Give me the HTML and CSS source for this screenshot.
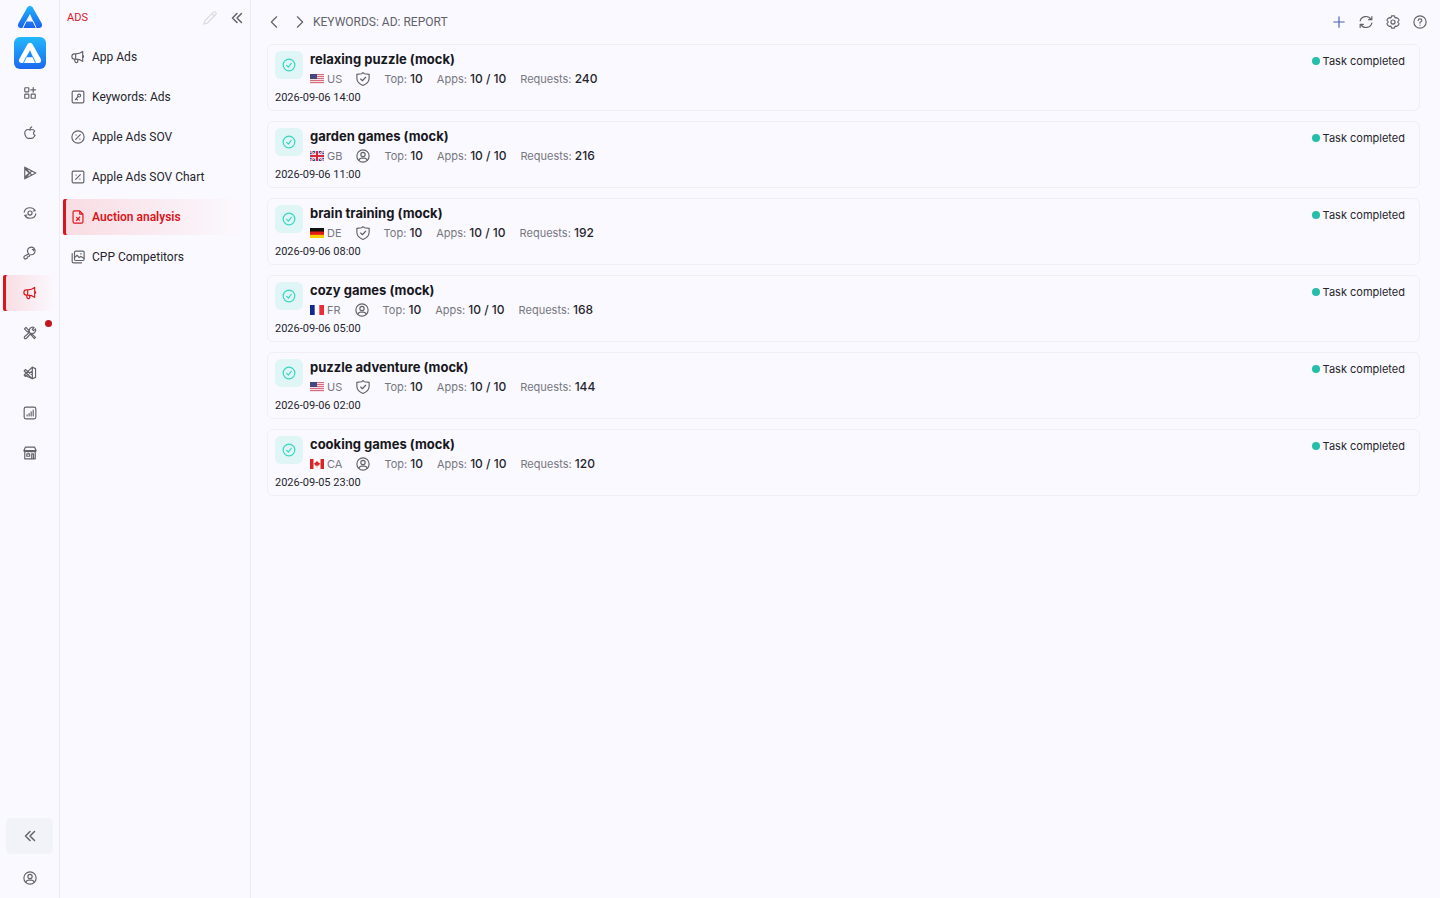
FILE: index.html
```html
<!DOCTYPE html>
<html lang="en">
<head>
    <meta charset="UTF-8">
    <meta name="viewport" content="width=device-width, initial-scale=1.0">
    <title>Auction analysis</title>
    <link rel="stylesheet" href="styles.css">
</head>
<body>
    <svg class="sprite" aria-hidden="true">
        <defs>
            <linearGradient id="brand" x1="0" y1="0" x2="0" y2="1">
                <stop offset="0" stop-color="#1fb6fb"/>
                <stop offset="1" stop-color="#1c62f0"/>
            </linearGradient>
        </defs>
        <symbol id="logo" viewBox="0 0 26 24">
            <path d="M10.4 2.2Q13 -.8 15.6 2.2L24.8 18.6Q26 22.6 22.4 23H3.4Q0 22.6 1.2 18.8ZM13 9L8.8 16.6H16.4Z" fill-rule="evenodd"/>
            <path class="seam" d="M16 16L19.400 23.500M9 16.400L5.600 23.500"/>
        </symbol>
        <symbol id="apps" viewBox="0 0 24 24"><rect x="3" y="3" width="7" height="7" rx="1"/><rect x="3" y="14" width="7" height="7" rx="1"/><rect x="14" y="14" width="7" height="7" rx="1"/><path d="M17.5 2.5v8M13.5 6.5h8"/></symbol>
        <symbol id="apple" viewBox="0 0 24 24"><path d="M12 7C9 5.500 6.500 6 5 7.500C2.500 10 3 15 5 18.500C7 22 8.500 22 12 21C15.500 22 17 22 19 18.500L20.500 16C17 14 17.500 10.500 20 8.500C18 5.500 15 5.500 12 7ZM12 6.500C12 4 13 2 15 1.500"/></symbol>
        <symbol id="play" viewBox="0 0 24 24"><path d="M3 2V22L22 12ZM3 2L15 15.500M3 22L15 8.500M3 5L11 12L3 19"/></symbol>
        <symbol id="orbit" viewBox="0 0 24 24"><circle cx="12" cy="12" r="3.500"/><path d="M2 10.500C3 5.500 7 3 12 3C16 3 19 4.800 20.500 7.500M22 13.500C21 18.500 17 21 12 21C8 21 5 19.200 3.500 16.500M17.500 8.500L21 8M6.500 15.500L3 16"/></symbol>
        <symbol id="key" viewBox="0 0 24 24"><path d="M10 13.500A6.500 6.500 0 1 1 14 15L11.500 15.500L10.500 18L8 18.500L7 21L3.500 22.500L1.500 20.500L2 17.500ZM16 6h2v2"/></symbol>
        <symbol id="megaphone" viewBox="0 0 24 24"><path d="M8 6.500H6A4.500 4.500 0 0 0 6 15.500H8ZM8 6.500C13 6.500 17 5 20 2.500V19.500C17 17 13 15.500 8 15.500M6 15.500L7 20.500Q9.500 23 11.500 20.500V16M20 8.500Q23 11 20 13.500"/></symbol>
        <symbol id="tools" viewBox="0 0 24 24"><path d="M2.500 5L5 2.500L10 7.500V10H7.500ZM9 9L15 15M14.500 13L21.500 19.500L19.500 21.500L13 14.500M3 18L11 11Q9.500 5 14 2.500Q16.500 1.500 19 2.500L16 6L18 8L21.500 5Q22.500 8 20.500 10.500Q18 14 13.500 12.500L6 21Q4 22.500 2.500 21Q1.500 19.500 3 18Z"/></symbol>
        <symbol id="vscode" viewBox="0 0 24 24"><path d="M16 2L21.500 4.500V19.500L16 22L2 8.500L4 6L16 15.500M16 2V22L2 15.500M16 2L2 15.500L4 18L16 8.500"/></symbol>
        <symbol id="bars" viewBox="0 0 24 24"><rect x="2" y="2" width="20" height="20" rx="3"/><path d="M7 17v-2M10.500 17v-4M14 17v-7M17.500 17V7"/></symbol>
        <symbol id="store" viewBox="0 0 24 24"><path d="M4 2H20L22.500 8Q21 11 18 9Q15 11 12 9Q9 11 6 9Q3 11 1.500 8ZM1.500 8H22.500M3 10.500V22H21V10.500M6.500 13.500h5v4h-5ZM15 22v-8.500h3V22"/></symbol>
        <symbol id="collapse" viewBox="0 0 24 24"><path d="M12 3L3 12L12 21M21 3L12 12L21 21"/></symbol>
        <symbol id="user" viewBox="0 0 24 24"><circle cx="12" cy="12" r="10.500"/><circle cx="12" cy="9.500" r="3.700"/><path d="M5 19.500Q6 15.500 9 15.500H15Q18 15.500 19 19.500"/></symbol>
        <symbol id="pencil" viewBox="0 0 24 24"><path d="M1.500 22.500L3 17L18 2Q20 .5 21.800 2.200Q23.500 4 22 6L7 21ZM15.500 4.500L19.500 8.500"/></symbol>
        <symbol id="key-box" viewBox="0 0 24 24"><rect x="2" y="2" width="20" height="20" rx="2"/><circle cx="14" cy="9.500" r="2.500"/><path d="M12 11.500L7.500 16.500M9 15l2 2"/></symbol>
        <symbol id="percent-circle" viewBox="0 0 24 24"><circle cx="12" cy="12" r="10.500"/><path d="M16 8L8 16M8.500 8.500h.5M15 15.500h.5"/></symbol>
        <symbol id="percent-box" viewBox="0 0 24 24"><rect x="2" y="2" width="20" height="20" rx="2"/><path d="M16 8L8 16M8.500 8.500h.5M15 15.500h.5"/></symbol>
        <symbol id="file" viewBox="0 0 24 24"><path d="M15 1.500H6Q3.500 1.500 3.500 4V20Q3.500 22.500 6 22.500H18Q20.500 22.500 20.500 20V7ZM15 1.500V7H20.500M15 12L9.500 18M9.500 12.500L14.500 17.500"/></symbol>
        <symbol id="gallery" viewBox="0 0 24 24"><rect x="6" y="2" width="16.500" height="16" rx="2"/><path d="M2 6V19.500Q2 22 4.500 22H18M6 13L10.500 9L14 13L17 11L22 14M16.500 6.500h1"/></symbol>
        <symbol id="prev" viewBox="0 0 24 24"><path d="M16.500 3L7.500 12L16.500 21"/></symbol>
        <symbol id="next" viewBox="0 0 24 24"><path d="M7.500 3L16.500 12L7.500 21"/></symbol>
        <symbol id="plus" viewBox="0 0 24 24"><path d="M12 3V21M3 12H21"/></symbol>
        <symbol id="refresh" viewBox="0 0 24 24"><path d="M2 10A10 9.500 0 0 1 20.500 7.500M22 2.500V8H16.500M22 14A10 9.500 0 0 1 3.500 16.500M2 21.500V16H7.500"/></symbol>
        <symbol id="gear" viewBox="0 0 24 24"><circle cx="12" cy="12" r="3.500"/><path d="M9.500 1.500H14.500L15.500 5L18.500 4.500L21 6.500L22.500 9L20 12L22.500 15L21 17.500L18.500 19.500L15.500 19L14.500 22.500H9.500L8.500 19L5.500 19.500L3 17.500L1.500 15L4 12L1.500 9L3 6.500L5.500 4.500L8.500 5Z"/></symbol>
        <symbol id="help" viewBox="0 0 24 24"><circle cx="12" cy="12" r="10.500"/><path d="M8.800 9.500Q9 6.500 12 6.500Q15.200 6.500 15.200 9.300Q15.200 11 12 12.500V14.200M12 17.200v.3"/></symbol>
        <symbol id="check" viewBox="0 0 24 24"><circle cx="12" cy="12" r="10"/><path d="M8 12.500L11 15.500L16 9"/></symbol>
        <symbol id="shield" viewBox="0 0 24 24"><path d="M12 1L14.500 3L22.500 4V11Q22 19 12 23Q2 19 1.500 11V4L9.500 3ZM8 12L11 15L16.500 9"/></symbol>
        <symbol id="flag-us" viewBox="0 0 14 10"><path fill="#f5dfe5" d="M0 0h14v10H0z"/><path stroke="#d66b7b" d="M0 .5h14M0 2.500h14M0 4.500h14M0 6.500h14M0 8.500h14"/><path fill="#45477f" d="M0 0h7v5H0z"/></symbol>
        <symbol id="flag-gb" viewBox="0 0 14 10"><path fill="#2b4b9b" d="M0 0h14v10H0z"/><path stroke="#fff" stroke-width="2" d="M0 0L14 10M14 0L0 10"/><path stroke="#d8293c" stroke-width=".8" d="M0 0L14 10M14 0L0 10"/><path stroke="#fff" stroke-width="3.400" d="M7 0V10M0 5H14"/><path stroke="#d8293c" stroke-width="2" d="M7 0V10M0 5H14"/></symbol>
        <symbol id="flag-de" viewBox="0 0 14 10"><path fill="#111" d="M0 0h14v4H0z"/><path fill="#e21a13" d="M0 3.500h14v3.500H0z"/><path fill="#fccf05" d="M0 6.800h14V10H0z"/></symbol>
        <symbol id="flag-fr" viewBox="0 0 14 10"><path fill="#fff" d="M0 0h14v10H0z"/><path fill="#102a91" d="M0 0h4.700v10H0z"/><path fill="#ed2c39" d="M9.300 0H14v10H9.300z"/></symbol>
        <symbol id="flag-ca" viewBox="0 0 14 10"><path fill="#fff" d="M0 0h14v10H0z"/><path fill="#db2525" d="M0 0h3.500v10H0zM10.500 0H14v10h-3.500zM7 1.500L7.800 3L8.500 2.800V4L10 4L9 6.500H7.300V8.500H6.700V6.500H5L4 4H5.500V2.800L6.200 3Z"/></symbol>
    </svg>

    <div class="layout">
        <nav class="rail" aria-label="Sections">
            <a href="#" class="rail-logo" aria-label="Home"><svg><use href="#logo"/></svg></a>
            <a href="#" class="rail-app" aria-label="Application"><svg><use href="#logo"/></svg></a>
            <div class="rail-items">
                <a href="#" class="rail-item" aria-label="Apps"><svg class="icon"><use href="#apps"/></svg></a>
                <a href="#" class="rail-item" aria-label="App Store"><svg class="icon"><use href="#apple"/></svg></a>
                <a href="#" class="rail-item" aria-label="Google Play"><svg class="icon"><use href="#play"/></svg></a>
                <a href="#" class="rail-item" aria-label="Tracking"><svg class="icon"><use href="#orbit"/></svg></a>
                <a href="#" class="rail-item" aria-label="Keywords"><svg class="icon"><use href="#key"/></svg></a>
                <a href="#" class="rail-item active" aria-label="Ads"><svg class="icon"><use href="#megaphone"/></svg></a>
                <a href="#" class="rail-item" aria-label="Tools"><svg class="icon"><use href="#tools"/></svg><span class="badge"></span></a>
                <a href="#" class="rail-item" aria-label="Developer"><svg class="icon"><use href="#vscode"/></svg></a>
                <a href="#" class="rail-item" aria-label="Charts"><svg class="icon"><use href="#bars"/></svg></a>
                <a href="#" class="rail-item" aria-label="Store"><svg class="icon"><use href="#store"/></svg></a>
            </div>
            <button class="rail-collapse" aria-label="Collapse"><svg class="icon small"><use href="#collapse"/></svg></button>
            <a href="#" class="rail-user" aria-label="Account"><svg class="icon"><use href="#user"/></svg></a>
        </nav>

        <aside class="submenu">
            <div class="submenu-header">
                <h2>ADS</h2>
                <button class="icon-button faded" aria-label="Edit menu"><svg class="icon"><use href="#pencil"/></svg></button>
                <button class="icon-button" aria-label="Hide menu"><svg class="icon small"><use href="#collapse"/></svg></button>
            </div>
            <nav class="submenu-items" aria-label="Ads">
                <a href="#" class="submenu-item"><svg class="icon"><use href="#megaphone"/></svg>App Ads</a>
                <a href="#" class="submenu-item"><svg class="icon"><use href="#key-box"/></svg>Keywords: Ads</a>
                <a href="#" class="submenu-item"><svg class="icon"><use href="#percent-circle"/></svg>Apple Ads SOV</a>
                <a href="#" class="submenu-item"><svg class="icon"><use href="#percent-box"/></svg>Apple Ads SOV Chart</a>
                <a href="#" class="submenu-item active"><svg class="icon"><use href="#file"/></svg>Auction analysis</a>
                <a href="#" class="submenu-item"><svg class="icon"><use href="#gallery"/></svg>CPP Competitors</a>
            </nav>
        </aside>

        <main class="content">
            <header class="toolbar">
                <button class="icon-button" aria-label="Back"><svg class="icon"><use href="#prev"/></svg></button>
                <button class="icon-button" aria-label="Forward"><svg class="icon"><use href="#next"/></svg></button>
                <h1>KEYWORDS: AD: REPORT</h1>
                <div class="toolbar-actions">
                    <button class="icon-button add" aria-label="Add"><svg class="icon"><use href="#plus"/></svg></button>
                    <button class="icon-button" aria-label="Refresh"><svg class="icon"><use href="#refresh"/></svg></button>
                    <button class="icon-button" aria-label="Settings"><svg class="icon"><use href="#gear"/></svg></button>
                    <button class="icon-button" aria-label="Help"><svg class="icon"><use href="#help"/></svg></button>
                </div>
            </header>

            <div class="reports">
                <article class="report">
                    <div class="report-icon"><svg class="icon"><use href="#check"/></svg></div>
                    <div class="report-info">
                        <h3>relaxing puzzle (mock)</h3>
                        <div class="report-meta">
                            <span class="country"><svg class="flag"><use href="#flag-us"/></svg>US</span>
                            <svg class="icon"><use href="#shield"/></svg>
                            <span>Top: <b>10</b></span>
                            <span>Apps: <b>10 / 10</b></span>
                            <span>Requests: <b>240</b></span>
                        </div>
                    </div>
                    <div class="report-status">Task completed</div>
                    <time class="report-date">2026-09-06 14:00</time>
                </article>
                <article class="report">
                    <div class="report-icon"><svg class="icon"><use href="#check"/></svg></div>
                    <div class="report-info">
                        <h3>garden games (mock)</h3>
                        <div class="report-meta">
                            <span class="country"><svg class="flag"><use href="#flag-gb"/></svg>GB</span>
                            <svg class="icon"><use href="#user"/></svg>
                            <span>Top: <b>10</b></span>
                            <span>Apps: <b>10 / 10</b></span>
                            <span>Requests: <b>216</b></span>
                        </div>
                    </div>
                    <div class="report-status">Task completed</div>
                    <time class="report-date">2026-09-06 11:00</time>
                </article>
                <article class="report">
                    <div class="report-icon"><svg class="icon"><use href="#check"/></svg></div>
                    <div class="report-info">
                        <h3>brain training (mock)</h3>
                        <div class="report-meta">
                            <span class="country"><svg class="flag"><use href="#flag-de"/></svg>DE</span>
                            <svg class="icon"><use href="#shield"/></svg>
                            <span>Top: <b>10</b></span>
                            <span>Apps: <b>10 / 10</b></span>
                            <span>Requests: <b>192</b></span>
                        </div>
                    </div>
                    <div class="report-status">Task completed</div>
                    <time class="report-date">2026-09-06 08:00</time>
                </article>
                <article class="report">
                    <div class="report-icon"><svg class="icon"><use href="#check"/></svg></div>
                    <div class="report-info">
                        <h3>cozy games (mock)</h3>
                        <div class="report-meta">
                            <span class="country"><svg class="flag"><use href="#flag-fr"/></svg>FR</span>
                            <svg class="icon"><use href="#user"/></svg>
                            <span>Top: <b>10</b></span>
                            <span>Apps: <b>10 / 10</b></span>
                            <span>Requests: <b>168</b></span>
                        </div>
                    </div>
                    <div class="report-status">Task completed</div>
                    <time class="report-date">2026-09-06 05:00</time>
                </article>
                <article class="report">
                    <div class="report-icon"><svg class="icon"><use href="#check"/></svg></div>
                    <div class="report-info">
                        <h3>puzzle adventure (mock)</h3>
                        <div class="report-meta">
                            <span class="country"><svg class="flag"><use href="#flag-us"/></svg>US</span>
                            <svg class="icon"><use href="#shield"/></svg>
                            <span>Top: <b>10</b></span>
                            <span>Apps: <b>10 / 10</b></span>
                            <span>Requests: <b>144</b></span>
                        </div>
                    </div>
                    <div class="report-status">Task completed</div>
                    <time class="report-date">2026-09-06 02:00</time>
                </article>
                <article class="report">
                    <div class="report-icon"><svg class="icon"><use href="#check"/></svg></div>
                    <div class="report-info">
                        <h3>cooking games (mock)</h3>
                        <div class="report-meta">
                            <span class="country"><svg class="flag"><use href="#flag-ca"/></svg>CA</span>
                            <svg class="icon"><use href="#user"/></svg>
                            <span>Top: <b>10</b></span>
                            <span>Apps: <b>10 / 10</b></span>
                            <span>Requests: <b>120</b></span>
                        </div>
                    </div>
                    <div class="report-status">Task completed</div>
                    <time class="report-date">2026-09-05 23:00</time>
                </article>
            </div>
        </main>
    </div>
</body>
</html>
```
FILE: styles.css
```css
* {
    margin: 0;
    padding: 0;
    box-sizing: border-box;
}

body {
    font-family: Roboto, 'Liberation Sans', sans-serif;
    font-size: 12px;
    line-height: 16px;
    background: #faf9ff;
    color: #25252b;
}

a {
    color: inherit;
    text-decoration: none;
}

button {
    background: none;
    border: none;
    color: inherit;
    font: inherit;
    cursor: pointer;
}

.sprite {
    display: block;
    width: 0;
    height: 0;
}

.icon {
    display: block;
    width: 14px;
    height: 14px;
    flex-shrink: 0;
    fill: none;
    stroke: currentColor;
    stroke-width: 2;
    stroke-linecap: round;
    stroke-linejoin: round;
}

.icon.small {
    width: 12px;
    height: 12px;
    stroke-width: 3;
}

.icon-button {
    display: flex;
    color: #62626a;
}

.icon-button.faded {
    color: #d9d9df;
}

.icon-button.add {
    color: #4b62b0;
}

.layout {
    display: flex;
    min-height: 100vh;
}

/* Left icon rail */
.rail {
    width: 60px;
    flex-shrink: 0;
    display: flex;
    flex-direction: column;
    align-items: center;
    padding: 5px 0 13px;
    border-right: 1px solid #ebebf1;
    color: #62626a;
}

.rail-logo svg,
.rail-app svg {
    display: block;
    width: 26px;
    height: 24px;
    fill: url(#brand);
    stroke: #faf9ff;
    stroke-width: 0;
}

.seam {
    fill: none;
    stroke-width: 1;
}

.rail-app {
    display: flex;
    align-items: center;
    justify-content: center;
    width: 32px;
    height: 32px;
    margin-top: 8px;
    border-radius: 6px;
    background: linear-gradient(#22b8fb, #1c68f1);
}

.rail-app svg {
    width: 24px;
    height: 22px;
    fill: #fff;
    stroke: #2492f6;
}

.rail-items {
    align-self: stretch;
    display: flex;
    flex-direction: column;
    gap: 4px;
    margin-top: 6px;
    padding: 0 3px;
}

.rail-item {
    position: relative;
    display: flex;
    align-items: center;
    justify-content: center;
    height: 36px;
    border-radius: 2px;
}

.rail-item.active,
.submenu-item.active {
    background: linear-gradient(90deg, #f9dce2, #faf9ff);
    color: #d9161c;
    box-shadow: inset 3px 0 #d9161c;
}

.badge {
    position: absolute;
    top: 5px;
    right: 4px;
    width: 7px;
    height: 7px;
    border-radius: 50%;
    background: #c0161c;
}

.rail-collapse {
    display: flex;
    align-items: center;
    justify-content: center;
    width: 47px;
    height: 36px;
    margin-top: auto;
    border-radius: 5px;
    background: #f2f3f8;
}

.rail-user {
    margin-top: 17px;
}

/* Section menu */
.submenu {
    width: 191px;
    flex-shrink: 0;
    border-right: 1px solid #ebebf1;
}

.submenu-header {
    display: flex;
    align-items: center;
    gap: 14px;
    height: 36px;
    padding: 0 7px;
}

.submenu-header h2 {
    flex: 1;
    font-size: 11px;
    font-weight: 400;
    color: #d9161c;
}

.submenu-items {
    display: flex;
    flex-direction: column;
    gap: 4px;
    margin-top: 3px;
    padding: 0 7px 0 3px;
}

.submenu-item {
    display: flex;
    align-items: center;
    gap: 7px;
    height: 36px;
    padding-left: 8px;
    border-radius: 2px;
}

.submenu-item .icon {
    color: #62626a;
}

.submenu-item.active {
    font-weight: 600;
}

.submenu-item.active .icon {
    color: inherit;
}

/* Page content */
.content {
    flex: 1;
    min-width: 0;
}

.toolbar {
    display: flex;
    align-items: center;
    gap: 12px;
    height: 44px;
    padding: 0 13px 0 16px;
}

.toolbar h1 {
    flex: 1;
    margin-left: -6px;
    font-size: 12px;
    font-weight: 400;
    color: #62626a;
}

.toolbar-actions {
    display: flex;
    gap: 13px;
}

.reports {
    display: flex;
    flex-direction: column;
    gap: 10px;
    padding: 0 20px 20px 16px;
}

.report {
    display: grid;
    grid-template-columns: 28px 1fr auto;
    column-gap: 7px;
    row-gap: 2px;
    padding: 6px 14px 4px 7px;
    border: 1px solid #f0eff6;
    border-radius: 6px;
}

.report-icon {
    display: flex;
    align-items: center;
    justify-content: center;
    width: 28px;
    height: 28px;
    border-radius: 6px;
    background: #e0f5f5;
    color: #35d6c2;
}

.report-info,
.report-status {
    font-family: Inter, 'Liberation Sans', sans-serif;
}

.report h3 {
    font-size: 13px;
    font-weight: 700;
    line-height: 16px;
    color: #17171c;
}

.report-meta {
    display: flex;
    align-items: center;
    gap: 14px;
    margin-top: 3px;
    font-size: 11px;
    line-height: 18px;
    color: #77777e;
}

.report-meta .icon {
    color: #62626a;
}

.report-meta b {
    font-size: 12px;
    font-weight: 500;
    color: #25252b;
}

.country {
    display: flex;
    align-items: center;
    gap: 3px;
}

.flag {
    width: 14px;
    height: 10px;
}

.report-status {
    display: flex;
    align-items: center;
    gap: 3px;
    height: 20px;
    font-size: 11px;
}

.report-status::before {
    content: '';
    width: 8px;
    height: 8px;
    border-radius: 50%;
    background: #25bfa9;
}

.report-date {
    grid-column: 1 / -1;
    font-size: 11px;
    line-height: 16px;
}
```
